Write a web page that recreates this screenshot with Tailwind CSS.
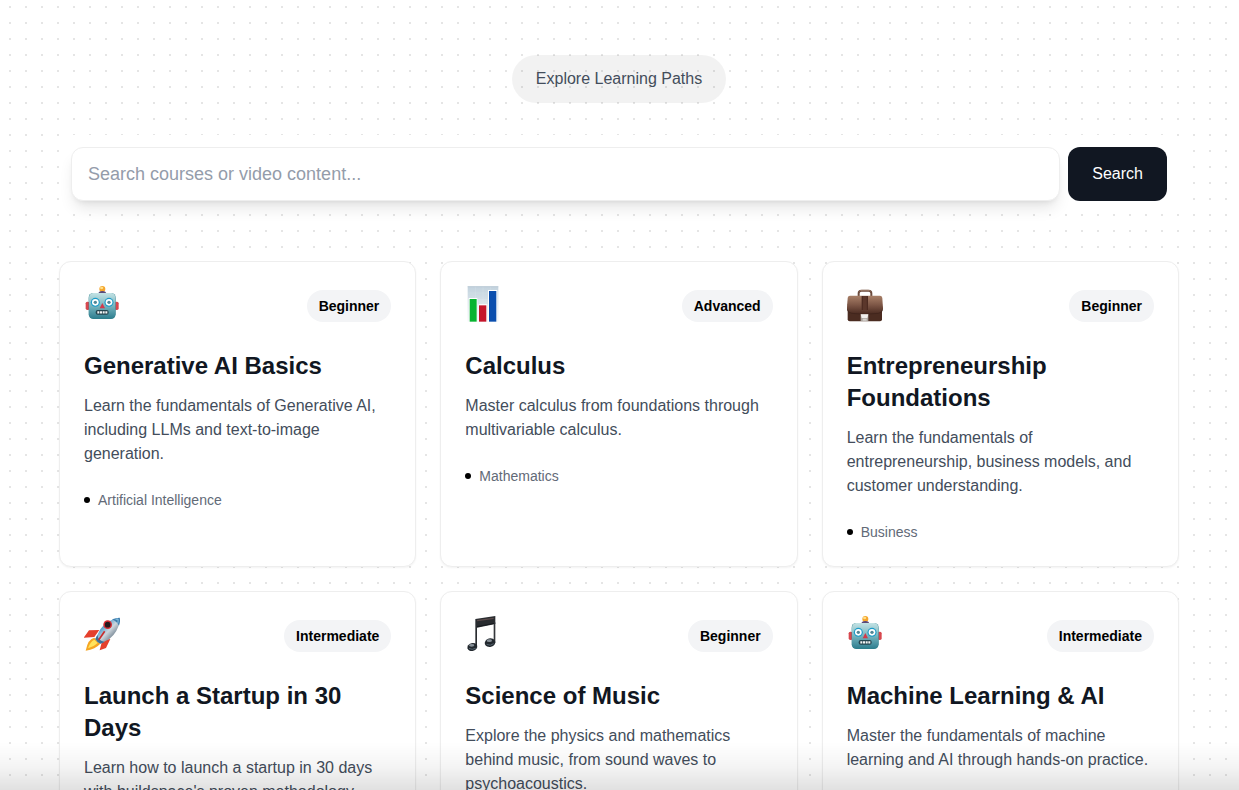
<!DOCTYPE html>
<html lang="en">
<head>
<meta charset="utf-8">
<meta name="viewport" content="width=device-width, initial-scale=1">
<title>Explore Learning Paths</title>
<script src="https://cdn.jsdelivr.net/npm/@tailwindcss/browser@4"></script>
</head>
<body class="h-screen overflow-hidden bg-white font-['Liberation_Sans',Arial,sans-serif] text-base">
<svg width="0" height="0" class="absolute" aria-hidden="true">
  <defs>
    <linearGradient id="robotFace" x1="0" y1="0" x2="0" y2="1"><stop stop-color="#c4e3e5"/><stop offset=".5" stop-color="#78b5bf"/><stop offset="1" stop-color="#2f7f90"/></linearGradient>
    <linearGradient id="chartBack" x1="0" y1="0" x2="0" y2="1"><stop stop-color="#c3d3de"/><stop offset="1" stop-color="#f0f5f8"/></linearGradient>
    <linearGradient id="leather" x1="0" y1="0" x2="0" y2="1"><stop stop-color="#a98068"/><stop offset=".5" stop-color="#7d5646"/><stop offset="1" stop-color="#48291f"/></linearGradient>
    <linearGradient id="rocketBody" x1="0" y1="0" x2="1" y2="1"><stop offset=".3" stop-color="#4b9acb"/><stop offset=".52" stop-color="#cdd6dd"/><stop offset=".8" stop-color="#596b7b"/></linearGradient>
  </defs>
  <symbol id="robot" viewBox="27 33 108 120">
    <circle cx="82" cy="42" r="9" fill="#f5a52c"/><ellipse cx="80" cy="39" rx="5" ry="3.500" fill="#ffe08a"/>
    <path d="M70 57q0-9 12-9t12 9z" fill="#5a4a78"/>
    <rect x="32" y="80" width="12" height="25" rx="5" fill="#d8474e"/><rect x="119" y="80" width="12" height="25" rx="5" fill="#d8474e"/>
    <rect x="41" y="54" width="81" height="78" rx="14" fill="#2e7f8b"/>
    <rect x="42" y="54" width="79" height="76" rx="13" fill="url(#robotFace)"/>
    <circle cx="61" cy="82" r="13.500" fill="#1c9cc9"/><circle cx="102" cy="82" r="13.500" fill="#1c9cc9"/>
    <circle cx="61" cy="82" r="10" fill="#fff"/><circle cx="102" cy="82" r="10" fill="#fff"/>
    <circle cx="61" cy="82" r="5" fill="#4f8797"/><circle cx="102" cy="82" r="5" fill="#4f8797"/>
    <path d="M82 84l8 16H74z" fill="#d3394b"/>
    <rect x="62" y="105" width="39" height="14" rx="6" fill="#254650"/>
    <path d="M67 112h30" stroke="#f5f5f5" stroke-width="7" stroke-dasharray="6 2"/>
  </symbol>
</svg>

<div class="relative min-h-screen bg-[conic-gradient(from_270deg_at_2px_2px,#e5e5e5_90deg,transparent_0)] bg-[length:16px_16px] bg-[position:9px_6px] pt-[55px] pr-[60px] pl-[59px]">
  <header class="flex justify-center">
    <h1 class="rounded-full bg-black/5 px-6 py-3 text-[#434d5b]">Explore Learning Paths</h1>
  </header>

  <main class="mx-auto max-w-[1120px]">
    <form class="mt-8 flex gap-2 rounded-xl bg-white p-3" onsubmit="return false">
      <input type="text" aria-label="Search courses" placeholder="Search courses or video content..." class="h-[54px] min-w-0 flex-1 rounded-xl border border-[#eeeeee] bg-white px-4 text-lg text-[#111827] shadow-lg placeholder:text-[#949caa]">
      <button type="submit" class="rounded-xl bg-[#111722] px-6 text-white">Search</button>
    </form>

    <section class="mt-12 grid grid-cols-3 gap-6" aria-label="Learning paths">
      <article class="rounded-xl border border-[#eeeeee] bg-white p-6 shadow-xs">
        <div class="flex items-center justify-between">
          <svg class="h-10 w-9" aria-hidden="true"><use href="#robot"/></svg>
          <span class="rounded-full bg-[#f3f4f6] px-3 py-1.5 text-sm font-bold text-black">Beginner</span>
        </div>
        <h2 class="mt-6 text-2xl font-bold text-[#111722]">Generative AI Basics</h2>
        <p class="mt-3 text-[#434d5b]">Learn the fundamentals of Generative AI, including LLMs and text-to-image generation.</p>
        <div class="mt-6 flex items-center gap-2 text-sm text-[#626a77]"><span class="size-1.5 rounded-full bg-black"></span>Artificial Intelligence</div>
      </article>

      <article class="rounded-xl border border-[#eeeeee] bg-white p-6 shadow-xs">
        <div class="flex items-center justify-between">
          <svg class="h-10 w-9" viewBox="31 33 108 120" aria-hidden="true">
            <rect x="39" y="34" width="92" height="106" fill="url(#chartBack)"/>
            <path d="M39 54h92M39 74h92M39 94h92M39 114h92M62 34v106M85 34v106M108 34v106" stroke="#fff" stroke-opacity=".35"/>
            <path d="M39 35h92" stroke="#b4c4d0" stroke-width="2"/>
            <path d="M42 69h26v71H42zM71 88h27v52H71zM100 45h28v95h-28z" fill="#fff"/>
            <path d="M45 72h21v68H45z" fill="#08b431"/><path d="M73 91h22v49H73z" fill="#c5152c"/><path d="M103 48h22v92h-22z" fill="#0a4eae"/>
          </svg>
          <span class="rounded-full bg-[#f3f4f6] px-3 py-1.5 text-sm font-bold text-black">Advanced</span>
        </div>
        <h2 class="mt-6 text-2xl font-bold text-[#111722]">Calculus</h2>
        <p class="mt-3 text-[#434d5b]">Master calculus from foundations through multivariable calculus.</p>
        <div class="mt-6 flex items-center gap-2 text-sm text-[#626a77]"><span class="size-1.5 rounded-full bg-black"></span>Mathematics</div>
      </article>

      <article class="rounded-xl border border-[#eeeeee] bg-white p-6 shadow-xs">
        <div class="flex items-center justify-between">
          <svg class="h-10 w-9" viewBox="34 33 108 120" aria-hidden="true">
            <path d="M69 64v-9q0-8 8-8h22q8 0 8 8v9" fill="none" stroke="#6b4a3c" stroke-width="6"/>
            <path d="M72 49q2-3 7-3h18q5 0 7 3" fill="none" stroke="#b79680" stroke-width="2"/>
            <rect x="36" y="82" width="103" height="57" rx="6" fill="#4b2c21"/>
            <path d="M43 62h90q6 0 7 7l2 31q0 12-13 15l-43 3-39-3q-13-3-13-15l2-31q1-7 7-7z" fill="url(#leather)"/>
            <path d="M35 103q1 10 14 12l37 3 42-3q12-2 13-12" fill="none" stroke="#3c2119" stroke-width="2"/>
            <path d="M78 63h19v42H78z" fill="#5b372b"/><path d="M80 63v42M95 63v42" stroke="#43241b" stroke-width="2"/>
            <path d="M75 118h23v20H75z" fill="#aaa49e"/><path d="M75 118h23l-3 11H78z" fill="#f2f0ed"/><path d="M81 131h12v6H81z" fill="#d8d4cf"/>
          </svg>
          <span class="rounded-full bg-[#f3f4f6] px-3 py-1.5 text-sm font-bold text-black">Beginner</span>
        </div>
        <h2 class="mt-6 text-2xl font-bold text-[#111722]">Entrepreneurship Foundations</h2>
        <p class="mt-3 text-[#434d5b]">Learn the fundamentals of entrepreneurship, business models, and customer understanding.</p>
        <div class="mt-6 flex items-center gap-2 text-sm text-[#626a77]"><span class="size-1.5 rounded-full bg-black"></span>Business</div>
      </article>

      <article class="rounded-xl border border-[#eeeeee] bg-white p-6 shadow-xs">
        <div class="flex items-center justify-between">
          <svg class="h-10 w-9" viewBox="27 33 108 120" aria-hidden="true">
            <path d="M73 75L42 76 26 98l32-2zM106 102l-13 27-19 7 8-31z" fill="#e5402c"/>
            <path d="M58 98q-19 3-26 39 30-5 44-21z" fill="#f6a623"/><path d="M58 104q-13 6-19 26 18-5 29-16z" fill="#ffe45e"/>
            <path d="M61 102l15-29q15-26 56-35 6 2 3 8-6 36-32 56l-27 14q-10-4-15-14z" fill="url(#rocketBody)"/>
            <path d="M111 43q13-5 23-5 3 10-2 24-6-12-21-19z" fill="#3f7fae"/>
            <path d="M122 43l7-1q1 8-1 14" fill="none" stroke="#92c8e7" stroke-width="3"/>
            <path d="M61 102l6-12q3 17 22 21l-13 5q-10-4-15-14z" fill="#3c7199"/>
            <circle cx="98" cy="59" r="13" fill="#d62a32"/><circle cx="98" cy="59" r="8.500" fill="#25191f"/>
            <path d="M89 79L71 105" stroke="#c92d2c" stroke-width="5"/>
          </svg>
          <span class="rounded-full bg-[#f3f4f6] px-3 py-1.5 text-sm font-bold text-black">Intermediate</span>
        </div>
        <h2 class="mt-6 text-2xl font-bold text-[#111722]">Launch a Startup in 30 Days</h2>
        <p class="mt-3 text-[#434d5b]">Learn how to launch a startup in 30 days with buildspace's proven methodology.</p>
      </article>

      <article class="rounded-xl border border-[#eeeeee] bg-white p-6 shadow-xs">
        <div class="flex items-center justify-between">
          <svg class="h-10 w-9" viewBox="31 33 108 120" aria-hidden="true">
            <path d="M62 42l60-9v24l-55 11v55h-5z" fill="#292c30"/><path d="M117 52h5v62h-5z" fill="#34373b"/>
            <path d="M67 47l50-7" stroke="#5b4b4b" stroke-width="4"/><path d="M67 65l52-10" stroke="#171b20" stroke-width="3"/>
            <ellipse cx="53" cy="126" rx="15" ry="12" transform="rotate(-15 53 126)" fill="#22282e"/><ellipse cx="106" cy="113" rx="16" ry="13" transform="rotate(-15 106 113)" fill="#22282e"/>
            <ellipse cx="51" cy="121" rx="8" ry="4" fill="#879098"/><ellipse cx="104" cy="107" rx="8" ry="4" fill="#879098"/>
            <path d="M43 130q9 6 20 0M96 118q11 6 21-2" fill="none" stroke="#51606b" stroke-width="3"/>
          </svg>
          <span class="rounded-full bg-[#f3f4f6] px-3 py-1.5 text-sm font-bold text-black">Beginner</span>
        </div>
        <h2 class="mt-6 text-2xl font-bold text-[#111722]">Science of Music</h2>
        <p class="mt-3 text-[#434d5b]">Explore the physics and mathematics behind music, from sound waves to psychoacoustics.</p>
      </article>

      <article class="rounded-xl border border-[#eeeeee] bg-white p-6 shadow-xs">
        <div class="flex items-center justify-between">
          <svg class="h-10 w-9" aria-hidden="true"><use href="#robot"/></svg>
          <span class="rounded-full bg-[#f3f4f6] px-3 py-1.5 text-sm font-bold text-black">Intermediate</span>
        </div>
        <h2 class="mt-6 text-2xl font-bold text-[#111722]">Machine Learning &amp; AI</h2>
        <p class="mt-3 text-[#434d5b]">Master the fundamentals of machine learning and AI through hands-on practice.</p>
      </article>
    </section>
  </main>
</div>
<div class="pointer-events-none fixed inset-x-0 bottom-0 h-12 bg-linear-to-t from-black/12 via-black/4 to-transparent"></div>
</body>
</html>
